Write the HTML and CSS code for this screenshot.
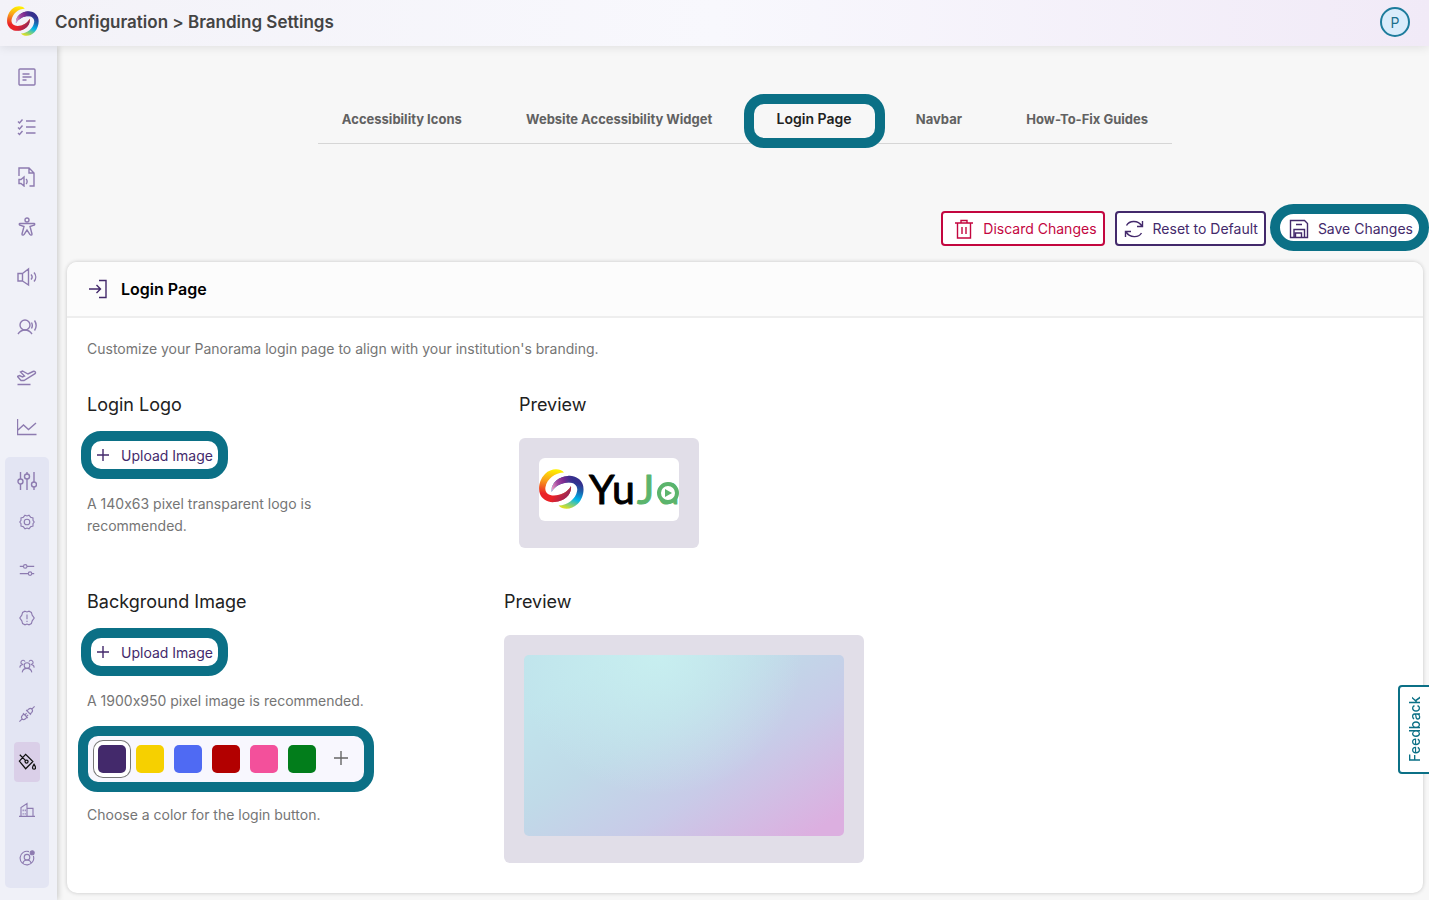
FILE: index.html
```html
<!DOCTYPE html>
<html lang="en">
<head>
  <meta charset="UTF-8">
  <meta name="viewport" content="width=device-width, initial-scale=1.0">
  <title>Branding Settings</title>
  <link rel="stylesheet" href="styles.css">
</head>
<body>

<!-- Shared swirl logo -->
<svg class="defs" width="0" height="0" aria-hidden="true">
  <defs>
    <linearGradient id="warm" gradientUnits="userSpaceOnUse" x1="20" y1="0" x2="14" y2="33">
      <stop offset="0.05" stop-color="#fff000"/>
      <stop offset="0.4" stop-color="#f9a01b"/>
      <stop offset="0.8" stop-color="#ea2227"/>
    </linearGradient>
    <linearGradient id="warm-end" gradientUnits="userSpaceOnUse" x1="8" y1="22" x2="30" y2="34">
      <stop offset="0.3" stop-color="#9c2456" stop-opacity="0"/>
      <stop offset="0.8" stop-color="#9c2456"/>
    </linearGradient>
    <linearGradient id="cool" gradientUnits="userSpaceOnUse" x1="22" y1="0" x2="10" y2="33">
      <stop offset="0.05" stop-color="#dfe021"/>
      <stop offset="0.2" stop-color="#7fcf7c"/>
      <stop offset="0.4" stop-color="#00b5ea"/>
      <stop offset="0.65" stop-color="#1b62ad"/>
      <stop offset="0.85" stop-color="#35308d"/>
    </linearGradient>
    <linearGradient id="cool-end" gradientUnits="userSpaceOnUse" x1="8" y1="30" x2="33" y2="22">
      <stop offset="0.1" stop-color="#5b2d90" stop-opacity="0"/>
      <stop offset="0.45" stop-color="#7c2a90"/>
      <stop offset="0.7" stop-color="#a1479f"/>
      <stop offset="1" stop-color="#f3a6c8"/>
    </linearGradient>
    <clipPath id="lower"><rect x="10" y="14" width="26" height="22"/></clipPath>
    <path id="arm" d="M25 3.500C21-1 12-1 6 5C0 11-1 20 1 25C3 30 9 34 16 33C25 32 33 26 32 17C28.500 23 22 26.500 15 26.500C9 26.500 5.500 23 6.500 18C8 10 16 3.500 25 3.500Z"/>
    <symbol id="swirl" viewBox="0 0 45 40" preserveAspectRatio="none">
      <use href="#arm" fill="url(#warm)"/>
      <use href="#arm" fill="url(#warm-end)"/>
      <g transform="rotate(180 22.3 20)">
        <use href="#arm" fill="url(#cool)"/>
        <use href="#arm" fill="url(#cool-end)" clip-path="url(#lower)"/>
      </g>
    </symbol>
  </defs>
</svg>

<header class="topbar">
  <a class="brand" href="#" aria-label="Home"><svg width="32" height="30"><use href="#swirl"/></svg></a>
  <h1>Configuration &gt; Branding Settings</h1>
  <button class="avatar" aria-label="Profile">P</button>
</header>

<div class="layout">
  <nav class="sidebar" aria-label="Main">
    <a href="#" aria-label="Reports"><svg viewBox="0 0 20 20"><rect x="2" y="2" width="16" height="16" rx="1"/><path d="M5.500 7h7M5.500 10h9M5.500 13h4"/></svg></a>
    <a href="#" aria-label="Checklist"><svg viewBox="0 0 20 20"><path d="M1 4.500l1.500 1.500L5.500 2.500M1 10.500l1.500 1.500L5.500 8.500M1 16l1.500 1.500L5.500 14M9 4h9.500M9 10h9.500M9 16h9.500"/></svg></a>
    <a href="#" aria-label="Audio files"><svg viewBox="0 0 20 20"><path d="M2 9V1h10l5 5v13h-4.500M12 1v5h5M2 12.500v4h2l3 2.500v-9l-3 2.500zM9 12c1.500 1 1.500 4 0 5"/></svg></a>
    <a href="#" aria-label="Accessibility"><svg viewBox="0 0 20 20"><circle cx="10" cy="3" r="2"/><path d="M3 6.500h14c1 0 1 1.500 0 1.700L13 9.500l2 7.500c.2 1.200-1.400 1.600-2 .5L10 13l-3 4.500c-.6 1.100-2.200.7-2-.5L7 9.500 3 8.200c-1-.2-1-1.700 0-1.700z"/></svg></a>
    <a href="#" aria-label="Sound"><svg viewBox="0 0 20 20"><path d="M1 6.500h4.500v7.500H1zM5.500 6.500L11.500 2v16l-6-4M14 7.500c1.300 1.400 1.300 3.600 0 5M17 5.500c2.300 2.600 2.300 6.400 0 9"/></svg></a>
    <a href="#" aria-label="Voice"><svg viewBox="0 0 20 20"><circle cx="8" cy="8" r="5"/><path d="M1 17c2-3 4-4 7-4s5 1 7 4M14.500 5.500c1 1.800 1 4.200 0 6M17.500 3.500c2 3 2 7 0 10"/></svg></a>
    <a href="#" aria-label="Travel"><svg viewBox="0 0 20 20"><path d="M.5 17.500h13M.5 9.500l2-1 3 1.500 2-1-4-4 2-1L11 7l5-2.500c1.500-.7 3.500.8 2 2.200L7 13.500H4z"/></svg></a>
    <a href="#" aria-label="Analytics"><svg viewBox="0 0 20 20"><path d="M.5 2v15.500h19M1 13l5.500-5 5 4.500L19 6"/></svg></a>

    <div class="subnav">
      <a class="parent" href="#" aria-label="Configuration"><svg viewBox="0 0 20 20"><path d="M3.500 1v7M3.500 13v6M10 1v2M10 8v11M17 1v10M17 16v3"/><circle cx="3.500" cy="10.500" r="2.500"/><circle cx="10" cy="5.500" r="2.500"/><circle cx="17" cy="13.500" r="2.500"/></svg></a>
      <a href="#" aria-label="Settings"><svg viewBox="0 0 20 20"><circle cx="10" cy="10" r="3.500"/><path d="M7.500 1.500L10 2.500l2.500-1L14.500 4l3 .8V8l1.500 2-1.500 2v3.200l-3 .8-2 2.500-2.500-1-2.500 1-2-2.500-3-.8V12L1 10l1.500-2V4.800L5.500 4z"/></svg></a>
      <a href="#" aria-label="Preferences"><svg viewBox="0 0 20 20"><path d="M1 5.500h4.500M10 5.500h9M1 14.500h10.500M16 14.500h3"/><circle cx="7.800" cy="5.500" r="2.200"/><circle cx="13.800" cy="14.500" r="2.200"/></svg></a>
      <a href="#" aria-label="Alerts"><svg viewBox="0 0 20 20"><path d="M7.500 1.500L10 2.500l2.500-1 3 1.500 1 3.500L19 10l-2.500 3.500-1 3.500-3 1.500-2.500-1-2.500 1-3-1.500-1-3.500L1 10l2.500-3.500 1-3.500zM10 5.500v6M10 13.500v1.500"/></svg></a>
      <a href="#" aria-label="Users"><svg viewBox="0 0 20 20"><circle cx="10" cy="9.500" r="3.500"/><path d="M4 18c.5-3.500 3-5 6-5s5.500 1.500 6 5M5.500 8C3 8 2 6.500 2.500 5c.5-2.500 4-3 5-.5M1 12c.3-2.500 2-4 4.500-4M14.500 8c2.500 0 3.500-1.500 3-3-.5-2.500-4-3-5-.5M19 12c-.3-2.500-2-4-4.500-4"/></svg></a>
      <a href="#" aria-label="Integrations"><svg viewBox="0 0 20 20"><path d="M.5 19.500l3.500-3.500M16 4l3.500-3.500M9 5l6 6M10 6l2-2c3-2.500 6.500 1 4 4l-2 2M5 9l6 6M6 10l-2 2c-2.500 3 1 6.500 4 4l2-2M7.500 11l2-2M9.500 13l2-2"/></svg></a>
      <a class="active" href="#" aria-label="Branding" aria-current="page"><svg viewBox="0 0 20 20"><path d="M2 2l6.500 6.500M1.500 9L8.500 1.500l8 8-8 8zM17.800 12.500c1 1.600 1.700 2.700 1.700 3.800a1.700 1.700 0 0 1-3.400 0c0-1.100.700-2.200 1.700-3.800z"/><circle cx="9.500" cy="9.500" r="1.700"/></svg></a>
      <a href="#" aria-label="Institution"><svg viewBox="0 0 20 20"><path d="M0 18h20M2.500 18V7l7.500-5v16M10 8h7.500v10M5.200 9.500v2M7.800 9.500v2M5.200 14v1.500M7.800 14v1.500"/></svg></a>
      <a href="#" aria-label="Account"><svg viewBox="0 0 20 20"><path d="M12.500 2A8.500 8.500 0 1 0 18 7.500M5 16.500c.5-3 2.500-4 5-4s4.500 1 5 4"/><circle cx="10" cy="9" r="3.500"/><circle class="dot" cx="16.500" cy="3.500" r="2.500"/></svg></a>
    </div>
  </nav>

  <main class="content">
    <nav class="tabs" aria-label="Branding sections">
      <a href="#">Accessibility Icons</a>
      <a href="#">Website Accessibility Widget</a>
      <a class="current ring" href="#" aria-current="page">Login Page</a>
      <a href="#">Navbar</a>
      <a href="#">How-To-Fix Guides</a>
    </nav>

    <div class="actions">
      <button class="btn danger"><svg viewBox="0 0 20 20"><path d="M1 4h18M7 4V1.500h6V4M3.500 4v15h13V4M8 8v7M12 8v7"/></svg>Discard Changes</button>
      <button class="btn reset"><svg viewBox="0 0 20 20"><path d="M2.500 6.500C5.500 1 14 1 18 7M18.500 2v5.500H13M17.500 14c-3 5-11.500 5-15.500-1M1.500 18v-5.500H7"/></svg>Reset to Default</button>
      <button class="btn save ring"><svg viewBox="0 0 20 20"><path d="M1.500 1.500h14l3 3v14h-17zM5 18.500V10.500h10.500v8M6.500 18v-4h6v4M7 5.500h6"/></svg>Save Changes</button>
    </div>

    <section class="card">
      <header class="card-head">
        <svg viewBox="0 0 20 20"><path d="M11 1.500h7v17h-7M1 10h11.500M8.500 6l4 4-4 4"/></svg>
        <h2>Login Page</h2>
      </header>
      <div class="card-body">
        <p>Customize your Panorama login page to align with your institution's branding.</p>

        <div class="setting logo-setting">
          <div class="controls">
            <h3>Login Logo</h3>
            <button class="upload ring"><svg viewBox="0 0 12 12"><path d="M6 0v12M0 6h12"/></svg>Upload Image</button>
            <p>A 140x63 pixel transparent logo is recommended.</p>
          </div>
          <div class="preview">
            <h3>Preview</h3>
            <div class="frame">
              <svg class="logo-preview" viewBox="0 0 140 63">
                <use href="#swirl" x="0" y="11" width="45" height="40"/>
                <text class="wordmark" x="50 73" y="46">Yu<tspan class="green" x="98 120">Ja</tspan></text>
                <circle class="play-ring" cx="129" cy="35" r="9"/>
                <path class="play" d="M126 31v8l7-4z"/>
              </svg>
            </div>
          </div>
        </div>

        <div class="setting background-setting">
          <div class="controls">
            <h3>Background Image</h3>
            <button class="upload ring"><svg viewBox="0 0 12 12"><path d="M6 0v12M0 6h12"/></svg>Upload Image</button>
            <p>A 1900x950 pixel image is recommended.</p>
            <div class="swatches ring">
              <button class="purple selected" aria-label="Purple"></button>
              <button class="yellow" aria-label="Yellow"></button>
              <button class="blue" aria-label="Blue"></button>
              <button class="red" aria-label="Red"></button>
              <button class="pink" aria-label="Pink"></button>
              <button class="leaf" aria-label="Green"></button>
              <button class="add" aria-label="Add color"><svg viewBox="0 0 14 14"><path d="M7 0v14M0 7h14"/></svg></button>
            </div>
            <p>Choose a color for the login button.</p>
          </div>
          <div class="preview">
            <h3>Preview</h3>
            <div class="frame"><div class="background-preview"></div></div>
          </div>
        </div>
      </div>
    </section>
  </main>
</div>

<button class="feedback">Feedback</button>

</body>
</html>
```
FILE: styles.css
```css
* {
  box-sizing: border-box;
}

body {
  margin: 0;
  min-height: 100vh;
  display: flex;
  flex-direction: column;
  font-family: Inter, "Liberation Sans", sans-serif;
  font-feature-settings: "calt" 0;
  background: #f7f7f7;
  color: #212121;
}

h1, h2, h3, p {
  margin: 0;
}

a {
  color: inherit;
  text-decoration: none;
}

button {
  font-family: inherit;
  cursor: pointer;
}

svg {
  fill: none;
  stroke: currentColor;
  stroke-width: 1.4;
  flex-shrink: 0;
}

.defs {
  position: absolute;
}

/* Top bar */
.topbar {
  display: flex;
  align-items: center;
  height: 46px;
  padding: 0 19px 2px 7px;
  background: linear-gradient(to right, #f3f2f8, #f8f8fd 50%, #f1eaf7);
  box-shadow: 0 1px 10px rgba(0, 0, 0, 0.1);
  z-index: 2;
}

.brand svg {
  display: block;
  margin-bottom: 2px;
  stroke: none;
}

.topbar h1 {
  margin-left: 16px;
  font-size: 17px;
  font-weight: 600;
  color: #444;
}

.avatar {
  width: 30px;
  height: 30px;
  margin-left: auto;
  padding: 0;
  border: 2px solid #1d7c9c;
  border-radius: 50%;
  background: #d9ecfb;
  color: #1b6f8c;
  font-size: 14px;
}

.layout {
  flex: 1;
  display: flex;
}

/* Sidebar */
.sidebar {
  display: flex;
  flex-direction: column;
  width: 57px;
  padding: 6px 8px 12px 5px;
  background: #f0f1f8;
  color: #8d7bb0;
  box-shadow: 1px 0 6px rgba(0, 0, 0, 0.2);
}

.sidebar a {
  display: flex;
  align-items: center;
  justify-content: center;
  height: 50px;
}

.sidebar svg {
  width: 20px;
  height: 20px;
}

.subnav {
  display: flex;
  flex-direction: column;
  align-items: center;
  gap: 8px;
  margin-top: 5px;
  padding: 4px 0 10px;
  border-radius: 5px;
  background: #e3e5f3;
}

.subnav a {
  width: 26px;
  height: 40px;
  border-radius: 4px;
}

.subnav .parent {
  height: 33px;
  padding-top: 6px;
}

.subnav a:not(.parent) svg {
  width: 16px;
  height: 16px;
}

.subnav .active {
  background: #dacfe8;
  color: #111;
}

.subnav a.active:not(.parent) svg {
  width: 18px;
  height: 18px;
}

.dot {
  fill: currentColor;
}

/* Main column */
.content {
  flex: 1;
  padding: 49px 6px 7px 10px;
}

.tabs {
  display: flex;
  justify-content: space-between;
  width: 63%;
  margin: 0 auto;
  padding: 14px 24px;
  border-bottom: 1px solid #d6d6d6;
  font-size: 13px;
  line-height: 20px;
  font-weight: 700;
  color: #616161;
}

.tabs .current {
  font-size: 14px;
  font-weight: 600;
  color: #212121;
}

/* Teal highlight drawn round a control */
.ring {
  position: relative;
}

.ring::after {
  content: '';
  position: absolute;
  inset: -7px;
  border: 10px solid #0b7086;
  border-radius: 20px;
  pointer-events: none;
}

.tabs .ring::after {
  inset: -15px -33px -19px;
}

.actions {
  display: flex;
  justify-content: flex-end;
  gap: 10px;
  margin-top: 67px;
}

.btn {
  display: flex;
  align-items: center;
  gap: 9px;
  height: 35px;
  padding: 0 6px 0 11px;
  border: 2px solid #43296b;
  border-radius: 4px;
  background: #fff;
  color: #43296b;
  font-size: 14px;
}

.btn svg {
  width: 20px;
  height: 20px;
}

.btn.danger {
  border-color: #c3063f;
  color: #c3063f;
}

.btn.reset {
  padding-left: 7px;
}

.btn.save {
  padding-right: 8px;
  border-radius: 16px;
}

.btn.ring::after {
  inset: -9px -8px -7px;
  border-radius: 24px;
}

/* Card */
.card {
  margin-top: 16px;
  border-radius: 10px;
  background: #fff;
  box-shadow: 0 0 4px rgba(0, 0, 0, 0.2);
}

.card-head {
  display: flex;
  align-items: center;
  gap: 13px;
  height: 56px;
  padding: 0 21px;
  border-bottom: 2px solid #eee;
  border-radius: 10px 10px 0 0;
  background: #fcfcfc;
}

.card-head svg {
  width: 20px;
  height: 20px;
  color: #43296b;
}

.card-head h2 {
  font-size: 16px;
  font-weight: 600;
  color: #000;
}

.card-body {
  padding: 20px 20px 30px;
}

.card-body p {
  font-size: 14px;
  line-height: 22px;
  color: #757575;
}

.card-body h3 {
  font-size: 18px;
  line-height: 24px;
  font-weight: 400;
}

.setting {
  display: flex;
  margin-top: 33px;
}

.logo-setting .controls {
  width: 432px;
  padding-right: 160px;
}

.background-setting {
  margin-top: 42px;
}

.background-setting .controls {
  width: 417px;
}

.upload {
  display: flex;
  align-items: center;
  gap: 12px;
  height: 34px;
  margin: 21px 0 21px 1px;
  padding: 0 8px 0 9px;
  border: 0;
  background: #fff;
  color: #43296b;
  font-size: 14px;
}

.upload svg {
  width: 12px;
  height: 12px;
}

.swatches {
  display: flex;
  align-items: center;
  gap: 10px;
  width: max-content;
  height: 52px;
  margin: 21px 0 19px -2px;
  padding: 0 12px 0 13px;
  background: #f8f7fe;
}

.swatches button {
  width: 28px;
  height: 28px;
  padding: 0;
  border: 0;
  border-radius: 5px;
}

.swatches .selected {
  box-shadow: 0 0 0 4px #fff, 0 0 0 5px #777;
}

.purple { background: #43296b; }
.yellow { background: #f6d000; }
.blue { background: #4f6af3; }
.red { background: #b20000; }
.pink { background: #f3509b; }
.leaf { background: #027d1b; }

.swatches .add {
  margin-left: 1px;
  background: none;
  color: #666;
}

.add svg {
  width: 14px;
  height: 14px;
}

.frame {
  margin-top: 21px;
  padding: 20px 20px 27px;
  border-radius: 6px;
  background: #e1dee8;
}

.logo-preview {
  display: block;
  width: 140px;
  height: 63px;
  border-radius: 6px;
  background: #fff;
  stroke: none;
}

.wordmark {
  font-family: Lato, sans-serif;
  font-size: 41px;
  fill: #000;
  stroke: #000;
  stroke-width: 1;
  stroke-linejoin: round;
}

.wordmark .green {
  fill: #5bb46c;
  stroke: #5bb46c;
}

.play-ring {
  fill: #fff;
  stroke: #5bb46c;
  stroke-width: 4;
}

.play {
  fill: #5bb46c;
}

.background-preview {
  width: 320px;
  height: 181px;
  border-radius: 5px;
  background:
    radial-gradient(ellipse at 42% 0%, rgba(200, 240, 240, 0.9), rgba(200, 240, 240, 0) 55%),
    linear-gradient(147deg, #c0e4ec 15%, #c0dae8 40%, #c8cbe8 64%, #dcafe0 94%);
}

/* Feedback tab */
.feedback {
  position: fixed;
  right: -2px;
  top: 685px;
  height: 89px;
  width: 33px;
  padding: 0;
  border: 2px solid #0b7086;
  border-radius: 0 4px 4px 0;
  background: #fff;
  color: #0b7086;
  font-size: 14px;
  font-weight: 500;
  writing-mode: vertical-rl;
  transform: rotate(180deg);
}
```
